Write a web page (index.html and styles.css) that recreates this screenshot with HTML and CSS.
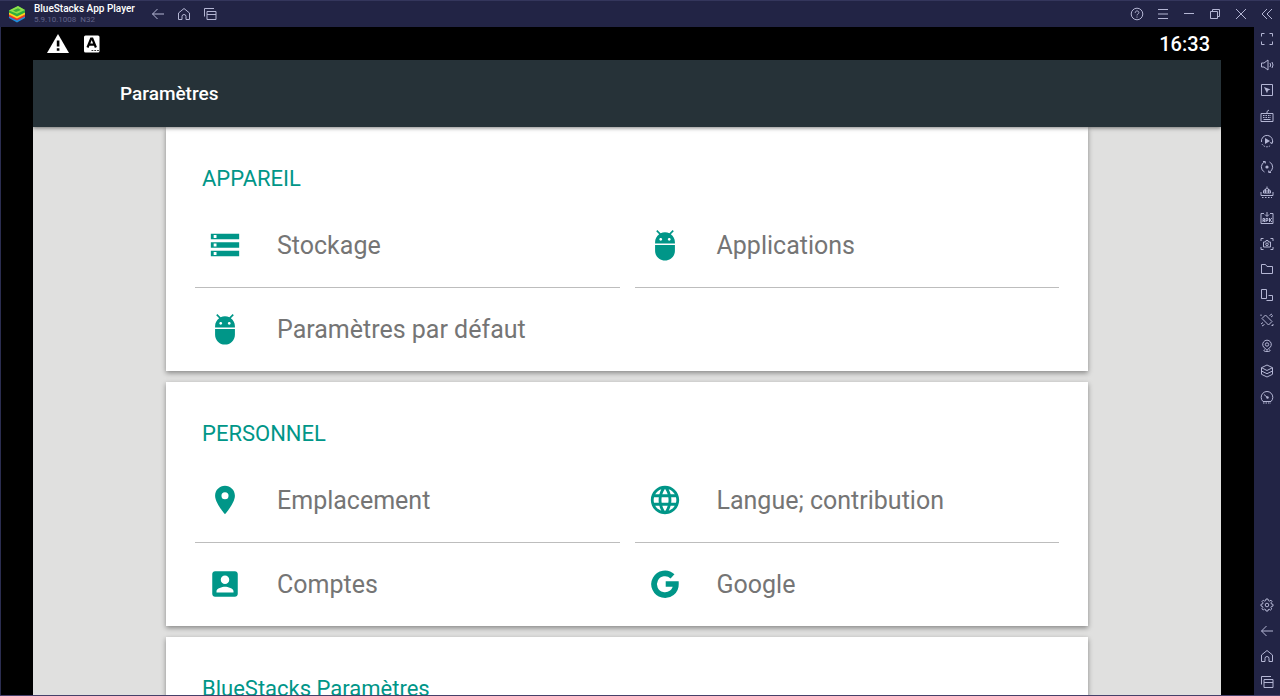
FILE: index.html
```html
<!DOCTYPE html>
<html lang="fr">
<head>
  <meta charset="UTF-8">
  <meta name="viewport" content="width=device-width, initial-scale=1.0">
  <title>BlueStacks App Player</title>
  <link rel="stylesheet" href="styles.css">
</head>
<body>

  <!-- Shared icons -->
  <svg class="sprite" aria-hidden="true">
    <symbol id="i-back" viewBox="0 0 14 14"><path d="M13 7H1.5M6.5 2L1.5 7l5 5"/></symbol>
    <symbol id="i-home" viewBox="0 0 14 14"><path d="M1.5 6L7 1.5 12.500 6v6.500H9V9.500a2 2 0 0 0-4 0v3H1.500z"/></symbol>
    <symbol id="i-recent" viewBox="0 0 14 14"><path d="M1.500 9.500v-8h9.500M4 4.500h9v8H4zM4 7.500h9"/></symbol>
    <symbol id="i-android" viewBox="0 0 24 24"><path d="M5 16c0 3.870 3.130 7 7 7s7-3.130 7-7v-4H5v4zM16.120 4.370l2.100-2.100-.820-.830-2.300 2.310C14.160 3.280 13.120 3 12 3s-2.160.280-3.090.750L6.600 1.440l-.820.830 2.100 2.100C6.140 5.640 5 7.680 5 10v1h14v-1c0-2.320-1.140-4.360-2.880-5.630zM9 9c-.550 0-1-.450-1-1s.450-1 1-1 1 .450 1 1-.450 1-1 1zm6 0c-.550 0-1-.450-1-1s.450-1 1-1 1 .450 1 1-.450 1-1 1z"/></symbol>
  </svg>

  <header class="titlebar">
    <div class="brand">
      <svg class="logo" viewBox="0 0 18 18" aria-hidden="true">
        <path fill="#1b8fe0" d="M1 11l8 3 8-3v2l-8 4.500L1 13z"/>
        <path fill="#e9372c" d="M1 9l8 3 8-3v2.500L9 15.500l-8-4z"/>
        <path fill="#ffd21f" d="M1 7l8 3 8-3v2.500L9 13.500l-8-4z"/>
        <path fill="#2fae3e" d="M1 5.500L10 1l7 4v2.500l-8 4-8-4z"/>
        <path fill="#8fe04b" d="M1 5.500L10 1l7 4-8 3.800z"/>
        <path fill="#3dae3b" d="M5 5.500l5-2.200 3 1.600-5 2.200z"/>
      </svg>
      <div>
        <h1 class="brand-name">BlueStacks App Player</h1>
        <p class="version">5.9.10.1008&nbsp; N32</p>
      </div>
    </div>
    <button class="tool" aria-label="Retour"><svg><use href="#i-back"/></svg></button>
    <button class="tool" aria-label="Accueil"><svg><use href="#i-home"/></svg></button>
    <button class="tool" aria-label="Applications récentes"><svg><use href="#i-recent"/></svg></button>
    <div class="window-tools">
      <button class="tool" aria-label="Aide"><svg viewBox="0 0 14 14"><circle cx="7" cy="7" r="5.800"/><path d="M5.200 5.800c0-2.500 3.700-2.400 3.700-.2C8.900 6.900 7 6.900 7 8.400M7 9.600v1"/></svg></button>
      <button class="tool" aria-label="Menu"><svg viewBox="0 0 14 14"><path d="M2 2.500h10M2 7h10M2 11.500h10"/></svg></button>
      <button class="tool" aria-label="Réduire"><svg viewBox="0 0 14 14"><path d="M2 6.500h10"/></svg></button>
      <button class="tool" aria-label="Restaurer"><svg viewBox="0 0 14 14"><path d="M2.500 4.500h7v7h-7zM4.500 4.500v-2h7v7h-2"/></svg></button>
      <button class="tool" aria-label="Fermer"><svg viewBox="0 0 14 14"><path d="M2 2l10 10M12 2L2 12"/></svg></button>
      <button class="tool" aria-label="Masquer la barre"><svg viewBox="0 0 14 14"><path d="M7 2L2 7l5 5M12 2L7 7l5 5"/></svg></button>
    </div>
  </header>

  <div class="workspace">
    <main class="screen">
      <div class="statusbar">
        <svg class="status-icon" viewBox="0 0 24 24" aria-hidden="true"><path fill="#fff" d="M12 2L1 21h22z"/><path fill="#000" d="M10.800 8.500h2.600v6h-2.600zM10.800 16.300h2.600v2.400h-2.600z"/></svg>
        <svg class="status-icon" viewBox="0 0 24 24" aria-hidden="true"><rect x="4" y="3.500" width="15.500" height="17" rx="1.500" fill="#fff"/><path d="M7.500 15.500L11.100 6.500h1.200L15.900 15.500M9 12.600h5.500" fill="none" stroke="#000" stroke-width="2.200"/><path d="M11.500 18.500h7.500" stroke="#333" stroke-dasharray="1.800 1"/></svg>
        <time class="clock">16:33</time>
      </div>

      <div class="appbar"><h2>Paramètres</h2></div>

      <div class="settings">
        <section class="card">
          <h3>APPAREIL</h3>
          <div class="tiles">
            <a class="tile" href="#stockage"><svg viewBox="0 0 24 24"><path d="M2 20h20v-4H2v4zm2-3h2v2H4v-2zM2 4v4h20V4H2zm4 3H4V5h2v2zm-4 7h20v-4H2v4zm2-3h2v2H4v-2z"/></svg>Stockage</a>
            <a class="tile" href="#applications"><svg><use href="#i-android"/></svg>Applications</a>
            <a class="tile" href="#defaut"><svg><use href="#i-android"/></svg>Paramètres par défaut</a>
          </div>
        </section>

        <section class="card">
          <h3>PERSONNEL</h3>
          <div class="tiles">
            <a class="tile" href="#emplacement"><svg viewBox="0 0 24 24"><path d="M12 2C8.130 2 5 5.130 5 9c0 5.250 7 13 7 13s7-7.750 7-13c0-3.870-3.130-7-7-7zm0 9.500a2.500 2.500 0 1 1 0-5 2.500 2.500 0 0 1 0 5z"/></svg>Emplacement</a>
            <a class="tile" href="#langue"><svg viewBox="0 0 24 24"><path d="M11.990 2C6.470 2 2 6.480 2 12s4.470 10 9.990 10C17.520 22 22 17.520 22 12S17.520 2 11.990 2zm6.930 6h-2.950c-.320-1.250-.780-2.450-1.380-3.560 1.840.630 3.370 1.910 4.330 3.560zM12 4.040c.830 1.200 1.480 2.530 1.910 3.960h-3.820c.430-1.430 1.080-2.760 1.910-3.960zM4.260 14C4.100 13.360 4 12.690 4 12s.100-1.360.260-2h3.380c-.080.660-.140 1.320-.140 2s.060 1.340.140 2H4.260zm.820 2h2.950c.320 1.250.780 2.450 1.380 3.560-1.840-.630-3.370-1.900-4.330-3.560zm2.950-8H5.080c.960-1.660 2.490-2.930 4.330-3.560C8.810 5.550 8.350 6.750 8.030 8zM12 19.960c-.830-1.200-1.480-2.530-1.910-3.960h3.820c-.430 1.430-1.080 2.760-1.910 3.960zM14.340 14H9.660c-.090-.660-.160-1.320-.160-2s.070-1.350.160-2h4.680c.090.650.160 1.320.160 2s-.070 1.340-.160 2zm.250 5.560c.600-1.110 1.060-2.310 1.380-3.560h2.950c-.960 1.650-2.490 2.930-4.330 3.560zM16.360 14c.080-.660.140-1.320.140-2s-.060-1.340-.140-2h3.380c.160.640.260 1.310.260 2s-.100 1.360-.260 2h-3.380z"/></svg>Langue; contribution</a>
            <a class="tile" href="#comptes"><svg viewBox="0 0 24 24"><path d="M3 5v14c0 1.100.890 2 2 2h14c1.100 0 2-.900 2-2V5c0-1.100-.900-2-2-2H5c-1.110 0-2 .900-2 2zm12 4c0 1.660-1.340 3-3 3s-3-1.340-3-3 1.340-3 3-3 3 1.340 3 3zm-9 8c0-2 4-3.100 6-3.100s6 1.100 6 3.100v1H6v-1z"/></svg>Comptes</a>
            <a class="tile" href="#google"><svg viewBox="0 0 24 24"><path class="google-ring" d="M17.300 6.600A7.700 7.700 0 1 0 19.700 12H12.500"/></svg>Google</a>
          </div>
        </section>

        <section class="card">
          <h3>BlueStacks Paramètres</h3>
          <div class="tiles"></div>
        </section>
      </div>
    </main>

    <aside class="sidebar">
      <div class="tools-main">
        <button aria-label="Plein écran"><svg viewBox="0 0 14 14"><path d="M1.500 4.500v-3h3M9.500 1.500h3v3M12.500 9.500v3h-3M4.500 12.500h-3v-3"/></svg></button>
        <button aria-label="Volume"><svg viewBox="0 0 14 14"><path d="M1.500 5h2.500l4-3v10L4 9H1.500zM10 5q1.300 2 0 4M12 4q2 3 0 6"/></svg></button>
        <button aria-label="Curseur"><svg viewBox="0 0 14 14"><path d="M1.500 1.500h11v11h-11z"/><path class="solid" d="M4 4l6.500 2.500-2.500 1-1 2.700z"/></svg></button>
        <button aria-label="Commandes clavier"><svg viewBox="0 0 14 14"><path d="M1 4.500h12v8H1zM7 4V2.500l2-1.500M3.500 10.500h7"/><path stroke-dasharray="1.500 1" d="M3 6.500h8M3 8.500h8"/></svg></button>
        <button aria-label="Macros"><svg viewBox="0 0 14 14"><path d="M1.500 8A5.600 5.600 0 1 1 12 9.500M12.800 7l-.8 2.500-2-1"/><path stroke-dasharray="1.500 1" d="M2 10a5.600 5.600 0 0 0 8.500 1.500"/><path class="solid" d="M5 4l5 3-5 3z"/></svg></button>
        <button aria-label="Synchronisation"><svg viewBox="0 0 14 14"><path d="M4.500 12A5.600 5.600 0 0 1 5 1.700M9.500 2A5.600 5.600 0 0 1 9 12.300M3 1.500h2.300v2M11 12.500H8.700v-2"/><circle class="solid" cx="7" cy="7" r="1.600"/></svg></button>
        <button aria-label="Multi-instance"><svg viewBox="0 0 14 14"><path d="M1 7v3.500h12V7M3.500 8V6q3.500-5 7 0v2zM7 3V1.500M3.500 6h7M5.500 4v4M8.500 4v4"/><path stroke-dasharray="1.500 1.500" d="M2 12.500h10"/></svg></button>
        <button aria-label="Installer un APK"><svg viewBox="0 0 14 14"><path d="M4 2.500H1v10h12v-10h-3M7 1v4M5 3.500l2 2 2-2"/><path d="M3 11V7.500h1.500v2H3M4.500 9.500V11M6 11V7.500h1.800v2H6M9.500 7v4M12 7L9.800 9l2.200 2"/></svg></button>
        <button aria-label="Capture d'écran"><svg viewBox="0 0 14 14"><path d="M1 4V1.500h2.500M10.500 1.500H13V4M13 10v2.500h-2.500M3.500 12.500H1V10M3.500 5h2l.500-1.500h2L8.500 5h2v5h-7z"/><circle cx="7" cy="7.300" r="1.300"/></svg></button>
        <button aria-label="Dossier multimédia"><svg viewBox="0 0 14 14"><path d="M1.500 11.500v-9h4l1.500 2h5.500v7z"/></svg></button>
        <button aria-label="Rotation"><svg viewBox="0 0 14 14"><path d="M1.500 1.500h5v9h-5zM8.500 7.500h4v5h-6"/></svg></button>
        <button aria-label="Secouer"><svg viewBox="0 0 14 14"><path d="M5.500 2L12 8.500 8.500 12 2 5.500zM9.500 2.500L12 1M11 4l2-1.500M1 11l2-1.500M2 13l2.500-1.500M1 3V1.500M13 11v1.500h-1.500"/></svg></button>
        <button aria-label="Position"><svg viewBox="0 0 14 14"><path d="M5.500 9.500a4.300 4.300 0 1 1 3 0L7 11.500zM4.500 10.500q-2 2 2.500 2t2.500-2"/><circle cx="7" cy="5.500" r="1.700"/></svg></button>
        <button aria-label="Instances"><svg viewBox="0 0 14 14"><path d="M7 1l5.500 2.700L7 6.500 1.500 3.700zM1.500 3.700v6.600L7 13l5.500-2.700V3.700M1.500 7L7 9.700 12.500 7"/></svg></button>
        <button aria-label="Performances"><svg viewBox="0 0 14 14"><path d="M3 11.500a5.800 5.800 0 1 1 8 0zM4 4.500l3.500 3"/><circle class="solid" cx="7.500" cy="7.500" r="1.200"/><path stroke-dasharray="1.500 1" d="M3 13h8"/></svg></button>
      </div>
      <div class="tools-nav">
        <button aria-label="Réglages"><svg viewBox="0 0 14 14"><path d="M6 1h2l.4 1.700 1 .4L11 2.200 12 3.500l-1 1.300.4 1.200L13 6.300v1.800l-1.600.3-.5 1.100.9 1.400-1.300 1.200-1.300-.9-1 .4L8 13H6l-.4-1.500-1-.4-1.400.9L2 10.700l.9-1.300-.4-1L1 8V6.200L2.600 6 3 4.800 2 3.500l1.200-1.300 1.400.9 1-.4z"/><circle cx="7" cy="7" r="1.800"/></svg></button>
        <button aria-label="Retour"><svg><use href="#i-back"/></svg></button>
        <button aria-label="Accueil"><svg><use href="#i-home"/></svg></button>
        <button aria-label="Applications récentes"><svg><use href="#i-recent"/></svg></button>
      </div>
    </aside>
  </div>

</body>
</html>
```
FILE: styles.css
```css
* { margin: 0; padding: 0; box-sizing: border-box; }
body {
  display: flex;
  flex-direction: column;
  height: 100vh;
  overflow: hidden;
  font-family: Roboto, "Liberation Sans", sans-serif;
  background: #222445;
}
.sprite { display: none; }
button {
  display: flex;
  align-items: center;
  justify-content: center;
  border: none;
  background: none;
  cursor: pointer;
}
button svg {
  width: 14px;
  height: 14px;
  fill: none;
  stroke: #b4b6d4;
  stroke-width: 1;
}
button .solid { fill: #b4b6d4; stroke: none; }
button:hover { background: #34375f; }

/* Window title bar */
.titlebar {
  display: flex;
  flex: none;
  height: 27px;
  border-top: 1px solid #34365c;
  color: #fff;
}
.brand {
  display: flex;
  align-items: center;
  gap: 8px;
  min-width: 145px;
  padding-left: 8px;
}
.logo { width: 18px; height: 18px; }
.brand-name {
  font-size: 10px;
  line-height: 12px;
  font-weight: 500;
  white-space: nowrap;
}
.version {
  font-size: 8px;
  line-height: 10px;
  color: #62658a;
}
.tool { width: 26px; padding-bottom: 1px; }
.window-tools { display: flex; margin-left: auto; }

.workspace {
  display: flex;
  flex: 1;
  min-height: 0;
  border-bottom: 1px solid #46406a;
}

/* Android screen */
.screen {
  display: flex;
  flex: 1;
  flex-direction: column;
  min-width: 0;
  padding: 0 33px;
  background: #000;
  box-shadow: inset 1px 0 #2b2d50;
}
.statusbar {
  display: flex;
  flex: none;
  align-items: center;
  gap: 10px;
  height: 33px;
  padding: 0 11px 0 13px;
}
.status-icon { width: 24px; height: 24px; }
.clock {
  margin-left: auto;
  font-size: 20px;
  font-weight: 500;
  color: #fff;
}
.appbar {
  z-index: 1;
  display: flex;
  flex: none;
  align-items: center;
  height: 67px;
  padding-left: 87px;
  background: #263238;
  box-shadow: 0 1px 4px rgba(0, 0, 0, 0.5);
}
.appbar h2 {
  font-size: 19px;
  font-weight: 500;
  color: #fff;
}
.settings {
  display: flex;
  flex: 1;
  flex-direction: column;
  gap: 11px;
  min-height: 0;
  padding: 0 133px;
  overflow: hidden;
  background: #e0e0df;
}
.card {
  flex: none;
  padding: 0 29px;
  background: #fff;
  box-shadow: 0 2px 5px rgba(0, 0, 0, 0.4);
}
.card h3 {
  padding: 26px 7px 0;
  font-size: 22px;
  line-height: 51px;
  font-weight: 400;
  color: #009688;
}
.tiles {
  display: grid;
  grid-template-columns: 1fr 1fr;
  column-gap: 15px;
}
.tile {
  display: flex;
  align-items: center;
  gap: 35px;
  height: 83px;
  padding-left: 13px;
  font-size: 25px;
  color: #757575;
  text-decoration: none;
}
.tile:nth-child(-n+2) {
  height: 84px;
  border-bottom: 1px solid #bdbdbd;
}
.tile svg {
  flex: none;
  width: 34px;
  height: 34px;
  margin-bottom: 2px;
  fill: #009688;
}
.tile .google-ring {
  fill: none;
  stroke: #009688;
  stroke-width: 4;
}

/* Right-hand tool strip */
.sidebar {
  display: flex;
  flex: none;
  flex-direction: column;
  justify-content: space-between;
  width: 26px;
  padding: 5px 0 6px;
}
.tools-main, .tools-nav {
  display: flex;
  flex-direction: column;
  justify-content: space-between;
}
.tools-main { height: 372px; }
.tools-nav { height: 91px; }
```
